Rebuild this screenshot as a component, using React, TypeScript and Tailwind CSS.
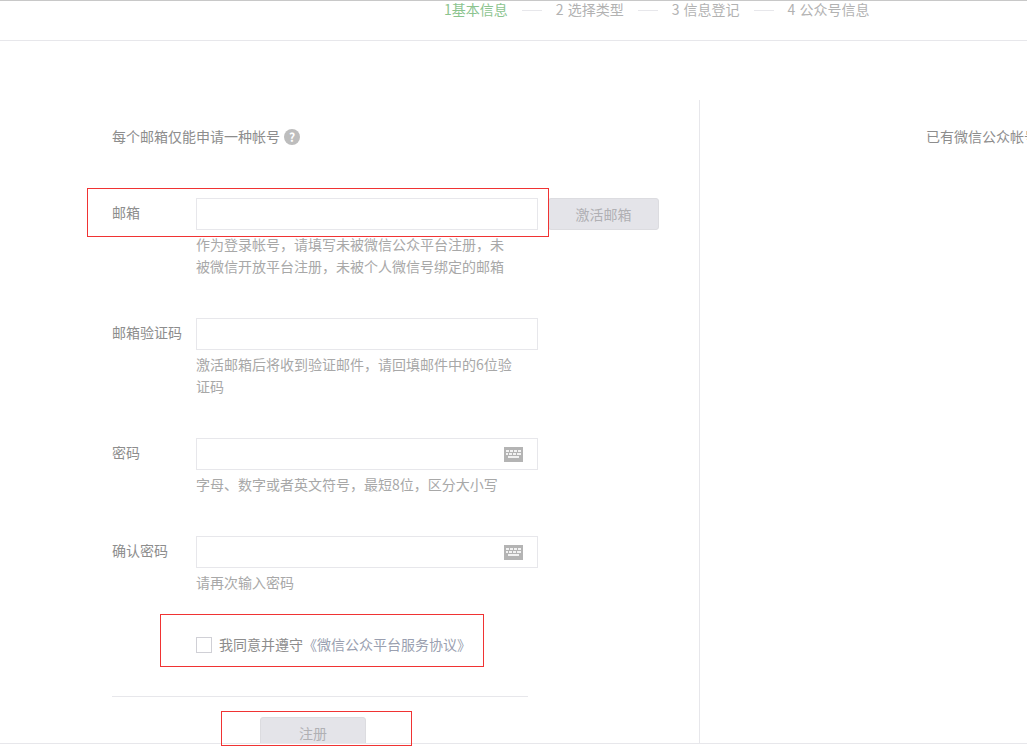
const steps = [
  { label: '1基本信息', active: true },
  { label: '2 选择类型' },
  { label: '3 信息登记' },
  { label: '4 公众号信息' },
];

function KeyboardIcon() {
  return (
    <svg width="19" height="15" viewBox="0 0 19 15" className="block">
      <rect width="19" height="15" fill="#b4b4b4" />
      <path d="M2 3h3v2H2zM6 3h3v2H6zM10 3h3v2h-3zM14 3h3v2h-3zM2 6h2v2H2zM5 6h3v2H5zM9 6h3v2H9zM13 6h4v2h-4zM4 9h11v2H4z" fill="#f2f2f2" />
    </svg>
  );
}

function HelpIcon() {
  return (
    <span className="ml-1 flex h-4 w-4 items-center justify-center rounded-full bg-[#bdbdbd] text-[12px] font-bold leading-none text-white">
      ?
    </span>
  );
}

function Field({
  label,
  hint,
  keyboard,
  action,
}: {
  label: string;
  hint: string[];
  keyboard?: boolean;
  action?: string;
}) {
  return (
    <div className="flex">
      <label className="h-8 w-[84px] leading-[28px] text-[#8d8d8d]">{label}</label>
      <div className="w-[342px]">
        <div className="flex h-8 items-center justify-end border border-[#e7e7eb] pr-[14px]">
          {keyboard && <KeyboardIcon />}
        </div>
        <div className="mt-[3px] pb-px leading-[22px] text-[#a8a8a8]">
          {hint.map((line) => (
            <p key={line}>{line}</p>
          ))}
        </div>
      </div>
      {action && (
        <button className="ml-[10px] h-8 w-[111px] rounded-[3px] border border-[#dcdce0] bg-[#e4e4e9] text-[#b0b0b4]">
          {action}
        </button>
      )}
    </div>
  );
}

export default function App() {
  return (
    <div className="relative h-[747px] w-full overflow-hidden bg-white text-sm font-['Noto_Sans_CJK_SC','Liberation_Sans',sans-serif]">
      <header className="h-[41px] border-t border-b border-t-[#c8c8c8] border-b-[#e7e7eb]">
        <ul className="ml-[444px] flex items-center leading-[16px] [word-spacing:1px]">
          {steps.map((step, i) => (
            <li key={step.label} className="flex items-center">
              {i > 0 && <span className="mx-[14px] mt-[3px] h-px w-5 bg-[#e7e7eb]" />}
              <span className={step.active ? 'text-[#8cc48f]' : 'text-[#b2b2b2]'}>{step.label}</span>
            </li>
          ))}
        </ul>
      </header>

      <main className="flex pt-[59px]">
        <section className="h-[643px] w-[700px] shrink-0 border-r border-[#e7e7eb] pl-[112px]">
          <div className="mt-[27px] flex h-5 items-center text-[#8d8d8d]">
            <span className="mb-0.5 leading-[20px]">每个邮箱仅能申请一种帐号</span>
            <HelpIcon />
          </div>

          <div className="mt-[51px] flex flex-col gap-10">
            <Field
              label="邮箱"
              action="激活邮箱"
              hint={['作为登录帐号，请填写未被微信公众平台注册，未', '被微信开放平台注册，未被个人微信号绑定的邮箱']}
            />
            <Field label="邮箱验证码" hint={['激活邮箱后将收到验证邮件，请回填邮件中的6位验', '证码']} />
            <Field label="密码" keyboard hint={['字母、数字或者英文符号，最短8位，区分大小写']} />
            <Field label="确认密码" keyboard hint={['请再次输入密码']} />
          </div>

          <label className="ml-[84px] mt-[42px] flex items-center">
            <span className="h-4 w-4 border border-[#d0d0d6]" />
            <span className="mb-0.5 ml-[7px] leading-4 text-[#8d8d8d]">
              我同意并遵守<span className="text-[#9a9fb0]">《微信公众平台服务协议》</span>
            </span>
          </label>

          <div className="mt-[42px] w-[416px] border-t border-[#e7e7eb] pt-5">
            <button className="ml-[148px] block h-8 w-[106px] rounded-[3px] border border-[#dcdce0] bg-[#e4e4e9] text-[#b0b0b4]">
              注册
            </button>
          </div>
        </section>

        <aside className="mt-[26px] whitespace-nowrap pl-[226px] leading-[20px] text-[#8d8d8d]">已有微信公众帐号？</aside>
      </main>

      {/* page footer edge sits over the button */}
      <div className="absolute inset-x-0 bottom-0 h-1 border-t border-[#e7e7eb] bg-white" />

      {/* red annotation boxes drawn on top of the screenshot */}
      <div className="absolute left-[87px] top-[188px] h-[49px] w-[462px] border border-[#f03333]" />
      <div className="absolute left-[160px] top-[614px] h-[53px] w-[324px] border border-[#f03333]" />
      <div className="absolute left-[221px] top-[711px] h-[35px] w-[191px] border border-[#f03333]" />
    </div>
  );
}
